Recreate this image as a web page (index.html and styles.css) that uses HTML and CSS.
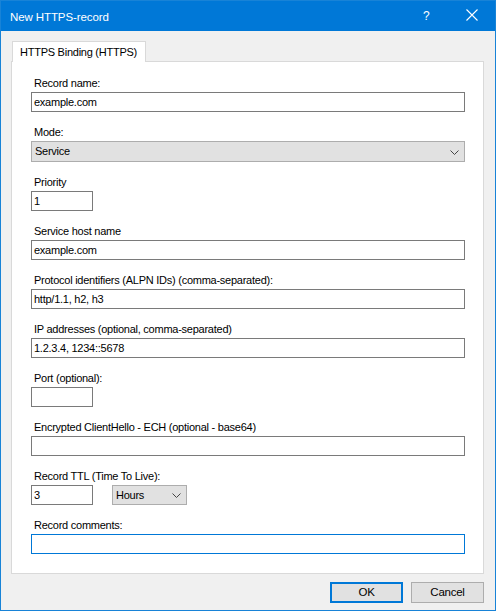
FILE: index.html
```html
<!DOCTYPE html>
<html>
<head>
<meta charset="utf-8">
<link rel="stylesheet" href="styles.css">
</head>
<body>
<div class="window">
  <div class="titlebar">
    <span class="title">New HTTPS-record</span>
    <span class="help">?</span>
    <svg class="close" width="12" height="12" viewBox="0 0 12 12"><path d="M0.5 0.5 L11.5 11.5 M11.5 0.5 L0.5 11.5" stroke="#fff" stroke-width="1.1" fill="none"/></svg>
  </div>
  <div class="content">
    <div class="tabs"><div class="tab">HTTPS Binding (HTTPS)</div></div>
    <div class="panel">
      <div class="field">
        <div class="label">Record name:</div>
        <div class="input">example.com</div>
      </div>
      <div class="field">
        <div class="label">Mode:</div>
        <div class="select wide">Service<svg class="chev" width="9" height="5" viewBox="0 0 9 5"><path d="M0.5 0.5 L4.5 4.5 L8.5 0.5" stroke="#444" fill="none"/></svg></div>
      </div>
      <div class="field">
        <div class="label">Priority</div>
        <div class="input short">1</div>
      </div>
      <div class="field">
        <div class="label">Service host name</div>
        <div class="input">example.com</div>
      </div>
      <div class="field">
        <div class="label">Protocol identifiers (ALPN IDs) (comma-separated):</div>
        <div class="input">http/1.1, h2, h3</div>
      </div>
      <div class="field">
        <div class="label">IP addresses (optional, comma-separated)</div>
        <div class="input">1.2.3.4, 1234::5678</div>
      </div>
      <div class="field">
        <div class="label">Port (optional):</div>
        <div class="input short"></div>
      </div>
      <div class="field">
        <div class="label">Encrypted ClientHello - ECH (optional - base64)</div>
        <div class="input"></div>
      </div>
      <div class="field">
        <div class="label">Record TTL (Time To Live):</div>
        <div class="row">
          <div class="input short">3</div>
          <div class="select units">Hours<svg class="chev" width="9" height="5" viewBox="0 0 9 5"><path d="M0.5 0.5 L4.5 4.5 L8.5 0.5" stroke="#444" fill="none"/></svg></div>
        </div>
      </div>
      <div class="field">
        <div class="label">Record comments:</div>
        <div class="input focused"></div>
      </div>
    </div>
    <div class="buttons">
      <div class="btn default">OK</div>
      <div class="btn">Cancel</div>
    </div>
  </div>
</div>
</body>
</html>
```
FILE: styles.css
```css
html, body {
  margin: 0;
  padding: 0;
}
body {
  font-family: "Liberation Sans", Arial, sans-serif;
  font-size: 11px;
  letter-spacing: -0.25px;
  color: #000;
  background: #f0f0f0;
}
.window {
  box-sizing: border-box;
  width: 496px;
  height: 611px;
  border: 1px solid #1883d7;
  background: #f0f0f0;
  display: flex;
  flex-direction: column;
}
.titlebar {
  height: 30px;
  background: #0078d7;
  color: #fff;
  display: flex;
  align-items: center;
  position: relative;
}
.title {
  margin-left: 9px;
  font-size: 11.5px;
  letter-spacing: -0.1px;
  margin-top: 1px;
}
.help {
  position: absolute;
  left: 422px;
  top: 8px;
  font-size: 12px;
}
.close {
  position: absolute;
  left: 465px;
  top: 8px;
}
.content {
  padding: 10px 0 0 10px;
}
.tabs {
  display: flex;
  height: 20px;
}
.tab {
  box-sizing: border-box;
  width: 134px;
  height: 21px;
  margin-left: 1px;
  border: 1px solid #d9d9d9;
  border-bottom: none;
  background: #fff;
  padding: 4px 0 0 7px;
  position: relative;
  z-index: 1;
}
.panel {
  box-sizing: border-box;
  width: 473px;
  height: 513px;
  border: 1px solid #d9d9d9;
  background: #fff;
  padding: 14px 0 0 19px;
}
.field {
  margin-bottom: 13px;
}
.label {
  height: 14px;
  line-height: 14px;
  margin-left: 3px;
  margin-bottom: 2px;
}
.input {
  box-sizing: border-box;
  width: 434px;
  height: 20px;
  border: 1px solid #7a7a7a;
  background: #fff;
  line-height: 18px;
  padding-left: 2px;
}
.input.short {
  width: 62px;
}
.input.focused {
  border-color: #0078d7;
}
.select {
  box-sizing: border-box;
  height: 21px;
  border: 1px solid #adadad;
  background: #e1e1e1;
  line-height: 19px;
  padding-left: 3px;
  position: relative;
}
.select.wide {
  width: 434px;
}
.select.units {
  width: 75px;
  height: 20px;
  line-height: 18px;
}
.chev {
  position: absolute;
  right: 5px;
  top: 8px;
}
.select.units .chev {
  top: 7px;
}
.row {
  display: flex;
  gap: 19px;
}
.buttons {
  display: flex;
  justify-content: flex-end;
  gap: 8px;
  width: 473px;
  margin-top: 8px;
}
.btn {
  box-sizing: border-box;
  width: 73px;
  height: 21px;
  border: 1px solid #adadad;
  background: #e1e1e1;
  text-align: center;
  line-height: 19px;
  font-size: 11.5px;
}
.btn.default {
  border: 2px solid #0078d7;
  line-height: 17px;
}
```
